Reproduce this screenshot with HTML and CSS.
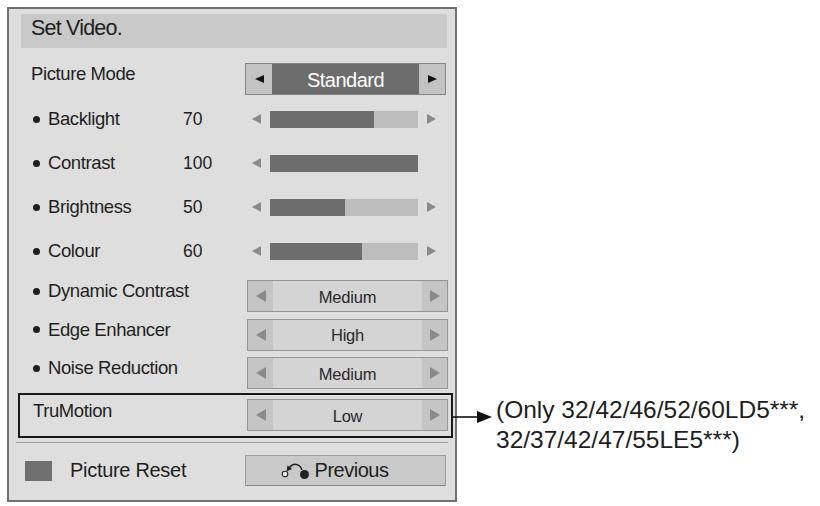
FILE: index.html
```html
<html>

<head>
    <link rel="stylesheet" href="styles.css">
</head>

<body>

    <div class="osd">
        <!-- title -->
        <div class="osd-title">Set Video.</div>

        <div class="row row-mode">
            <span class="label">Picture Mode</span>
            <div class="picker picker-dark">
                <span class="pk-side"><i class="tri tri-l"></i></span>
                <span class="pk-value">Standard</span>
                <span class="pk-side"><i class="tri tri-r"></i></span>
            </div>
        </div>

        <!-- sliders -->
        <div class="row row-slider">
            <span class="label"><i class="dot"></i>Backlight</span>
            <span class="num">70</span>
            <div class="slider">
                <i class="tri tri-l"></i>
                <span class="track"><span class="fill" style="width:70%"></span></span>
                <i class="tri tri-r"></i>
            </div>
        </div>
        <div class="row row-slider">
            <span class="label"><i class="dot"></i>Contrast</span>
            <span class="num">100</span>
            <div class="slider">
                <i class="tri tri-l"></i>
                <span class="track"><span class="fill" style="width:100%"></span></span>
                <i class="tri tri-r tri-off"></i>
            </div>
        </div>
        <div class="row row-slider">
            <span class="label"><i class="dot"></i>Brightness</span>
            <span class="num">50</span>
            <div class="slider">
                <i class="tri tri-l"></i>
                <span class="track"><span class="fill" style="width:51%"></span></span>
                <i class="tri tri-r"></i>
            </div>
        </div>
        <div class="row row-slider">
            <span class="label"><i class="dot"></i>Colour</span>
            <span class="num">60</span>
            <div class="slider">
                <i class="tri tri-l"></i>
                <span class="track"><span class="fill" style="width:62%"></span></span>
                <i class="tri tri-r"></i>
            </div>
        </div>

        <!-- option pickers -->
        <div class="selects">
            <div class="row row-select">
                <span class="label"><i class="dot"></i>Dynamic Contrast</span>
                <div class="picker picker-light">
                    <span class="pk-side"><i class="tri tri-l"></i></span>
                    <span class="pk-value">Medium</span>
                    <span class="pk-side"><i class="tri tri-r"></i></span>
                </div>
            </div>
            <div class="row row-select">
                <span class="label"><i class="dot"></i>Edge Enhancer</span>
                <div class="picker picker-light">
                    <span class="pk-side"><i class="tri tri-l"></i></span>
                    <span class="pk-value">High</span>
                    <span class="pk-side"><i class="tri tri-r"></i></span>
                </div>
            </div>
            <div class="row row-select">
                <span class="label"><i class="dot"></i>Noise Reduction</span>
                <div class="picker picker-light">
                    <span class="pk-side"><i class="tri tri-l"></i></span>
                    <span class="pk-value">Medium</span>
                    <span class="pk-side"><i class="tri tri-r"></i></span>
                </div>
            </div>
        </div>

        <div class="trumotion">
            <span class="label">TruMotion</span>
            <div class="picker picker-light">
                <span class="pk-side"><i class="tri tri-l"></i></span>
                <span class="pk-value">Low</span>
                <span class="pk-side"><i class="tri tri-r"></i></span>
            </div>
        </div>

        <div class="sep"></div>

        <!-- bottom buttons -->
        <div class="bottom">
            <div class="reset"><span class="swatch"></span><span>Picture Reset</span></div>
            <div class="btn-prev">
                <svg class="prev-icon" width="30" height="20" viewBox="0 0 30 20">
                    <circle cx="4" cy="13" r="2.8" fill="#ececec" stroke="#222" stroke-width="1.1"/>
                    <circle cx="23.5" cy="13.5" r="4.5" fill="#222"/>
                    <path d="M21 9 C19 2.5 12 1.5 8.5 6.5" fill="none" stroke="#222" stroke-width="1.5"/>
                    <polygon points="5.5,10.5 6.5,4.5 11,8" fill="#222"/>
                </svg>
                <span>Previous</span>
            </div>
        </div>
    </div>

    <!-- callout -->
    <div class="note">
        <svg class="note-arrow" width="40" height="30" viewBox="0 0 40 30">
            <line x1="0" y1="22" x2="28" y2="22" stroke="#111" stroke-width="1.6"/>
            <polygon points="24,16 39,22 24,28" fill="#111"/>
        </svg>
        <div class="note-text">(Only 32/42/46/52/60LD5***,<br>32/37/42/47/55LE5***)</div>
    </div>

</body>

</html>
```

FILE: styles.css
```css
body {
    margin: 0;
    background: #fff;
    display: flex;
    align-items: flex-start;
    font-family: "Liberation Sans", Arial, sans-serif;
    color: #1e1e1e;
}

.osd {
    box-sizing: border-box;
    margin: 7px 0 0 7px;
    width: 450px;
    height: 495px;
    border: 2px solid #707070;
    background: #dedede;
    padding: 5px 8px 0 12px;
    display: flex;
    flex-direction: column;
}

.osd-title {
    box-sizing: border-box;
    height: 34px;
    background: #c9c9c9;
    padding: 2px 0 0 10px;
    font-size: 21.5px;
    line-height: 24px;
    letter-spacing: -0.8px;
}

/* rows */
.row {
    display: grid;
    grid-template-columns: 152px 62px 201px;
    padding-left: 10px;
}

.label {
    font-size: 18.5px;
    letter-spacing: -0.4px;
    line-height: 20px;
    display: flex;
    align-items: center;
    white-space: nowrap;
}

.num {
    font-size: 17.5px;
    line-height: 20px;
}

.dot {
    width: 7px;
    height: 7px;
    border-radius: 50%;
    background: #1e1e1e;
    margin: 0 8px 0 2px;
}

.row-mode {
    height: 49px;
    box-sizing: border-box;
    padding-top: 15px;
    align-items: start;
}
.row-mode .label {
    grid-column: 1 / 3;
    margin-top: 1px;
}

.row-slider {
    height: 44px;
    align-items: center;
}

.selects {
    padding-top: 7px;
    display: flex;
    flex-direction: column;
    gap: 6.5px;
}

.row-select {
    align-items: start;
}
.row-select .label {
    grid-column: 1 / 3;
    margin-top: 1px;
}
.row-select .picker {
    margin-left: 2px;
}

/* triangles */
.tri {
    display: block;
    width: 0;
    height: 0;
    border-top: 5px solid transparent;
    border-bottom: 5px solid transparent;
}
.tri-l {
    border-right: 9px solid currentColor;
}
.tri-r {
    border-left: 9px solid currentColor;
}
.tri-off {
    visibility: hidden;
}

/* pickers */
.picker {
    box-sizing: border-box;
    height: 32px;
    width: 201px;
    display: flex;
}

.pk-side {
    display: flex;
    align-items: center;
    justify-content: center;
}

.pk-value {
    flex: 1;
    display: flex;
    align-items: center;
    justify-content: center;
    padding-top: 2px;
}

.picker-dark {
    border: 1px solid #858585;
    background: #c3c3c3;
    color: #111;
}
.picker-dark .pk-side {
    width: 26px;
}
.picker-dark .tri {
    border-top-width: 4.5px;
    border-bottom-width: 4.5px;
}
.picker-dark .pk-value {
    background: #6d6d6d;
    color: #fff;
    font-size: 20px;
    letter-spacing: -0.5px;
}

.picker-light {
    border: 1px solid #969696;
    background: #c5c5c5;
    color: #8a8a8a;
}
.picker-light .pk-side {
    width: 25px;
}
.picker-light .tri {
    border-top-width: 6px;
    border-bottom-width: 6px;
    border-left-width: 10px;
    border-right-width: 10px;
}
.picker-light .tri-l {
    border-left: 0;
}
.picker-light .tri-r {
    border-right: 0;
}
.picker-light .pk-value {
    background: #d4d4d4;
    color: #2a2a2a;
    font-size: 16.5px;
    letter-spacing: -0.2px;
}

/* sliders */
.slider {
    display: flex;
    align-items: center;
    padding-left: 7px;
    color: #8a8a8a;
}
.slider .track {
    width: 148px;
    height: 17px;
    background: #bdbdbd;
    margin: 0 9px 0 9px;
    display: flex;
}
.slider .fill {
    background: #6d6d6d;
}

/* trumotion frame */
.trumotion {
    margin: 4px -6px 0 -3px;
    border: 2px solid #1a1a1a;
    padding: 4px 3px 5px 13px;
    display: flex;
    justify-content: space-between;
    align-items: flex-start;
}
.trumotion .label {
    margin-top: 2px;
}

.sep {
    margin: 4px -1px 0 -5px;
    height: 1px;
    background: #a0a0a0;
}

/* bottom */
.bottom {
    margin-top: 12px;
    display: grid;
    grid-template-columns: 224px 201px;
}

.reset {
    display: flex;
    align-items: center;
    padding-left: 4px;
    font-size: 20px;
    letter-spacing: -0.3px;
}
.swatch {
    width: 27px;
    height: 20px;
    background: #6f6f6f;
    margin-right: 18px;
}

.btn-prev {
    box-sizing: border-box;
    height: 31px;
    border: 1px solid #9c9c9c;
    border-bottom-color: #8a8a8a;
    background: #c9c9c9;
    display: flex;
    align-items: center;
    justify-content: center;
    padding-right: 22px;
    font-size: 20px;
    letter-spacing: -0.5px;
}
.prev-icon {
    margin-right: 4px;
}

/* callout */
.note {
    margin: 395px 0 0 -4px;
    display: flex;
    align-items: flex-start;
}
.note-arrow {
    flex: none;
}
.note-text {
    margin-left: 3px;
    font-size: 24.5px;
    line-height: 30px;
    white-space: nowrap;
    color: #1e1e1e;
}
```
